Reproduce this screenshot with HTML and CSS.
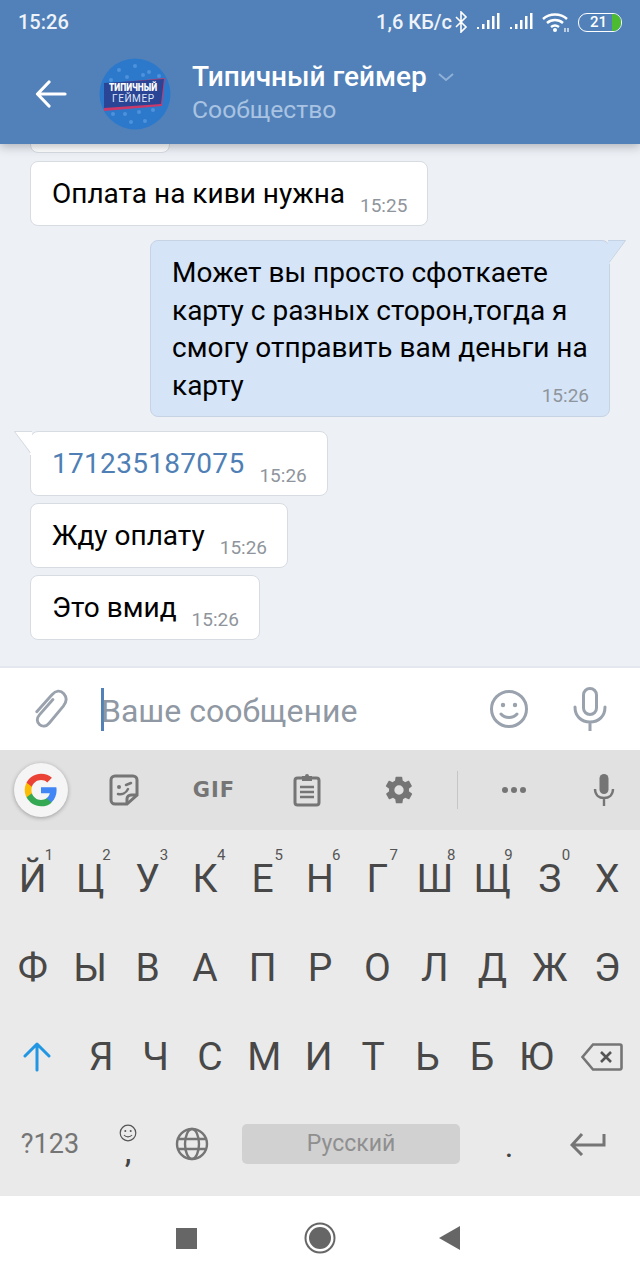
FILE: index.html
```html
<!DOCTYPE html>
<html lang="ru">
<head>
  <meta charset="UTF-8">
  <meta name="viewport" content="width=device-width, initial-scale=1.0">
  <title>Типичный геймер</title>
  <link rel="stylesheet" href="styles.css">
</head>
<body>
  <div class="app">
    <header class="top">
      <div class="status">
        <span class="clock">15:26</span>
        <div class="status-right">
          <span class="speed">1,6 КБ/с</span>
          <svg class="ic-bt" width="14" height="22" viewBox="0 0 14 22"><path d="M2 6l10 10-5 5V1l5 5L2 16" fill="none" stroke="#fff" stroke-width="1.6"/></svg>
          <svg class="ic-sig" width="24" height="20" viewBox="0 0 24 20"><path d="M1 15h2v2H1zM6 12h2.500v5H6zM11 8h2.500v9H11zM16 4h2.500v13H16zM21 1h2.500v16H21z" fill="#fff"/></svg>
          <svg class="ic-sig" width="24" height="20" viewBox="0 0 24 20"><path d="M1 15h2v2H1zM6 12h2.500v5H6zM11 8h2.500v9H11zM16 4h2.500v13H16zM21 1h2.500v16H21z" fill="#fff"/></svg>
          <svg class="ic-wifi" width="28" height="22" viewBox="0 0 28 22"><path d="M1 8c6.500-6 17.500-6 24 0M5 12c4.500-4 11.500-4 16 0M9 16c2.500-2 5.500-2 8 0" fill="none" stroke="#fff" stroke-width="2.400"/><circle cx="13" cy="19" r="2" fill="#fff"/><path d="M23 17v4M26 17v4" stroke="#fff" stroke-width="1.200"/></svg>
          <div class="battery"><span class="battery-level"></span><span class="battery-num">21</span></div>
        </div>
      </div>
      <div class="titlebar">
        <svg class="back" width="32" height="28" viewBox="0 0 32 28"><path d="M30 14H3M14 2L2.500 14 14 26" fill="none" stroke="#fff" stroke-width="3.200" stroke-linecap="round" stroke-linejoin="round"/></svg>
        <svg class="avatar" width="72" height="72" viewBox="0 0 72 72">
          <circle cx="36" cy="36" r="35.500" fill="#2c79cc"/>
          <g fill="#4f92dc">
            <circle cx="20" cy="12" r="2"/><circle cx="36" cy="8" r="2"/><circle cx="50" cy="14" r="2"/><circle cx="28" cy="19" r="2"/><circle cx="44" cy="17" r="2"/>
            <circle cx="12" cy="22" r="2"/><circle cx="60" cy="18" r="2"/><circle cx="14" cy="56" r="2"/><circle cx="26" cy="56" r="2"/><circle cx="40" cy="54" r="2"/>
            <circle cx="54" cy="52" r="2"/><circle cx="32" cy="64" r="2"/><circle cx="46" cy="63" r="2"/>
          </g>
          <path d="M5 26L66 20 63 48 5 53z" fill="#c93a6b"/>
          <path d="M5 25L65 21 62 46 5 50z" fill="#2a4595"/>
          <text class="av-top" x="10" y="33" textLength="48" lengthAdjust="spacingAndGlyphs">ТИПИЧНЫЙ</text>
          <text class="av-bot" x="13" y="44" textLength="42" lengthAdjust="spacing">ГЕЙМЕР</text>
        </svg>
        <div class="titles">
          <div class="title-row">
            <span class="title">Типичный геймер</span>
            <svg width="16" height="9" viewBox="0 0 16 9"><path d="M1 1l7 6 7-6" fill="none" stroke="#8fb0d8" stroke-width="2"/></svg>
          </div>
          <div class="subtitle">Сообщество</div>
        </div>
      </div>
    </header>

    <main class="chat">
      <div class="msg stub"></div>
      <div class="msg gap-s">
        <span class="msg-text">Оплата на киви нужна</span>
        <span class="msg-time">15:25</span>
      </div>
      <div class="msg out gap-l">
        <svg class="tail tail-out" width="20" height="24" viewBox="0 0 20 24"><path d="M0 .5h17.500L2 20v4H0z" fill="#d5e4f7"/><path d="M0 .5h17.500L1.500 22" fill="none" stroke="#c5d3e4"/></svg>
        <p class="msg-text">Может вы просто сфоткаете карту с разных сторон,тогда я смогу отправить вам деньги на карту <span class="msg-time">15:26</span></p>
      </div>
      <div class="msg gap-l">
        <svg class="tail tail-in" width="20" height="24" viewBox="0 0 20 24"><path d="M20 .5H2.500L18 20v4h2z" fill="#fff"/><path d="M20 .5H2.500L18.500 22" fill="none" stroke="#d7dce2"/></svg>
        <span class="msg-text link">171235187075</span>
        <span class="msg-time">15:26</span>
      </div>
      <div class="msg gap-xs">
        <span class="msg-text">Жду оплату</span>
        <span class="msg-time">15:26</span>
      </div>
      <div class="msg gap-xs">
        <span class="msg-text">Это вмид</span>
        <span class="msg-time">15:26</span>
      </div>
    </main>

    <div class="composer">
      <svg class="clip" width="38" height="42" viewBox="0 0 38 42"><path d="M22 11L8 27c-3.500 4-3 8 0 10.500s7 2 10-1.500L33 18c4-5 4-9 .5-13S25 1.500 21 6L5 24" fill="none" stroke="#99a2ad" stroke-width="3" stroke-linecap="round" transform="translate(1 1) scale(.95)"/></svg>
      <div class="input">
        <span class="caret"></span>
        <span class="placeholder">Ваше сообщение</span>
      </div>
      <svg class="smile" width="40" height="40" viewBox="0 0 40 40"><circle cx="20" cy="20" r="17.500" fill="none" stroke="#99a2ad" stroke-width="3"/><circle cx="14" cy="16" r="2.200" fill="#99a2ad"/><circle cx="26" cy="16" r="2.200" fill="#99a2ad"/><path d="M12 25c4 4.500 12 4.500 16 0" fill="none" stroke="#99a2ad" stroke-width="3" stroke-linecap="round"/></svg>
      <svg class="mic" width="34" height="44" viewBox="0 0 34 44"><rect x="10.500" y="1.500" width="13" height="26" rx="6.500" fill="none" stroke="#99a2ad" stroke-width="3"/><path d="M2 20c0 9 6 15 15 15s15-6 15-15M17 35v9" fill="none" stroke="#99a2ad" stroke-width="3" stroke-linecap="round"/></svg>
    </div>

    <section class="keyboard">
      <div class="kb-tools">
        <div class="tool"><div class="g-btn">
          <svg width="34" height="34" viewBox="0 0 48 48"><path fill="#4285f4" d="M46 24.500c0-1.600-.1-3.100-.4-4.500H24v8.500h12.400c-.5 2.900-2.200 5.300-4.600 6.900v5.700h7.400c4.300-4 6.800-9.900 6.800-16.600z"/><path fill="#34a853" d="M24 47c6.200 0 11.400-2 15.200-5.500l-7.400-5.700c-2 1.400-4.700 2.200-7.800 2.200-6 0-11-4-12.800-9.500H3.600v5.900C7.400 41.800 15.100 47 24 47z"/><path fill="#fbbc05" d="M11.200 28.500c-.5-1.400-.7-2.900-.7-4.500s.3-3.100.7-4.500v-5.900H3.600C2 16.700 1 20.200 1 24s1 7.300 2.600 10.400z"/><path fill="#ea4335" d="M24 10c3.400 0 6.400 1.200 8.800 3.400l6.600-6.600C35.400 3.100 30.200 1 24 1 15.100 1 7.400 6.200 3.600 13.600l7.600 5.900C13 14 18 10 24 10z"/></svg>
        </div></div>
        <div class="tool"><svg width="30" height="32" viewBox="0 0 30 32"><path d="M6 2h18a4 4 0 0 1 4 4v15L18 30H6a4 4 0 0 1-4-4V6a4 4 0 0 1 4-4z" fill="none" stroke="#757575" stroke-width="3"/><path d="M18 30v-5a4 4 0 0 1 4-4h6" fill="none" stroke="#757575" stroke-width="3"/><circle cx="10" cy="13" r="2" fill="#757575"/><path d="M17 11l5-2M9 20c4 1 8-1 10-5" fill="none" stroke="#757575" stroke-width="2.500" stroke-linecap="round"/></svg></div>
        <div class="tool gif">GIF</div>
        <div class="tool"><svg width="28" height="34" viewBox="0 0 28 34"><rect x="2" y="5" width="24" height="27" rx="2.500" fill="none" stroke="#757575" stroke-width="3"/><path d="M9 3h3a2 2 0 0 1 4 0h3v5H9z" fill="#757575"/><path d="M7 14h14M7 19h14M7 24h14" stroke="#757575" stroke-width="2.500"/></svg></div>
        <div class="tool"><svg width="32" height="32" viewBox="0 0 24 24"><path fill="#757575" d="M19.400 13c.1-.3.100-.7.100-1s0-.7-.1-1l2.100-1.600c.2-.2.200-.4.100-.6l-2-3.500c-.1-.2-.4-.3-.6-.2l-2.500 1c-.5-.4-1.100-.7-1.700-1l-.4-2.600c0-.3-.2-.5-.5-.5h-4c-.3 0-.5.200-.5.500l-.4 2.600c-.6.300-1.200.6-1.700 1l-2.500-1c-.2-.1-.5 0-.6.200l-2 3.500c-.1.200-.1.500.1.600L4.600 11c0 .3-.1.700-.1 1s0 .7.1 1l-2.100 1.600c-.2.200-.2.400-.1.600l2 3.500c.1.200.4.300.6.200l2.500-1c.5.400 1.100.7 1.700 1l.4 2.600c0 .3.200.5.500.5h4c.3 0 .5-.2.500-.5l.4-2.600c.6-.3 1.200-.6 1.700-1l2.500 1c.2.100.5 0 .6-.2l2-3.500c.1-.2.100-.5-.1-.6zM12 15.500a3.500 3.500 0 1 1 0-7 3.500 3.500 0 0 1 0 7z"/></svg></div>
        <div class="tool"><span class="tool-sep"></span></div>
        <div class="tool"><div class="dots"><span></span><span></span><span></span></div></div>
        <div class="tool tool-last"><svg width="22" height="32" viewBox="0 0 22 32"><rect x="6.500" y="0" width="9" height="20" rx="4.500" fill="#757575"/><path d="M2 15c0 6 4 9 9 9s9-3 9-9M11 24v8" fill="none" stroke="#757575" stroke-width="2.400"/></svg></div>
      </div>

      <div class="kb-row row-full">
        <div class="key">Й<sup>1</sup></div><div class="key">Ц<sup>2</sup></div><div class="key">У<sup>3</sup></div><div class="key">К<sup>4</sup></div><div class="key">Е<sup>5</sup></div><div class="key">Н<sup>6</sup></div><div class="key">Г<sup>7</sup></div><div class="key">Ш<sup>8</sup></div><div class="key">Щ<sup>9</sup></div><div class="key">З<sup>0</sup></div><div class="key">Х</div>
      </div>
      <div class="kb-row row-full">
        <div class="key">Ф</div><div class="key">Ы</div><div class="key">В</div><div class="key">А</div><div class="key">П</div><div class="key">Р</div><div class="key">О</div><div class="key">Л</div><div class="key">Д</div><div class="key">Ж</div><div class="key">Э</div>
      </div>
      <div class="kb-row row-shift">
        <div class="key"><svg width="30" height="30" viewBox="0 0 30 30"><path d="M15 28V3M3 14L15 2l12 12" fill="none" stroke="#2196e3" stroke-width="3" stroke-linecap="round" stroke-linejoin="round"/></svg></div>
        <div class="key">Я</div><div class="key">Ч</div><div class="key">С</div><div class="key">М</div><div class="key">И</div><div class="key">Т</div><div class="key">Ь</div><div class="key">Б</div><div class="key">Ю</div>
        <div class="key"><svg width="42" height="28" viewBox="0 0 42 28"><path d="M12 1.500h27a1.500 1.500 0 0 1 1.500 1.500v22a1.500 1.500 0 0 1-1.500 1.500H12L1.500 14z" fill="none" stroke="#757575" stroke-width="2.600"/><path d="M20 9l10 10M30 9L20 19" stroke="#555" stroke-width="2.600"/></svg></div>
      </div>
      <div class="kb-row row-bottom">
        <div class="key key-sym">?123</div>
        <div class="key key-comma">
          <svg width="18" height="18" viewBox="0 0 18 18"><circle cx="9" cy="9" r="7.800" fill="none" stroke="#555" stroke-width="1.200"/><circle cx="6.300" cy="7" r="1" fill="#555"/><circle cx="11.700" cy="7" r="1" fill="#555"/><path d="M5 11c2 2.500 6 2.500 8 0" fill="none" stroke="#555" stroke-width="1.200"/></svg>
          <span class="comma">,</span>
        </div>
        <div class="key"><svg width="34" height="34" viewBox="0 0 34 34"><g fill="none" stroke="#757575" stroke-width="2.400"><circle cx="17" cy="17" r="15"/><ellipse cx="17" cy="17" rx="7" ry="15"/><path d="M3 12h28M3 22h28"/></g></svg></div>
        <div class="key key-space"><span class="space">Русский</span></div>
        <div class="key key-dot">.</div>
        <div class="key key-enter"><svg width="36" height="24" viewBox="0 0 36 24"><path d="M34 2v11H3M12 2L2 13l10 10" fill="none" stroke="#757575" stroke-width="3"/></svg></div>
      </div>
    </section>

    <nav class="softkeys">
      <span class="nav-square"></span>
      <span class="nav-home"></span>
      <svg width="22" height="24" viewBox="0 0 22 24"><path d="M21 0v24L0 12z" fill="#666"/></svg>
    </nav>
  </div>
</body>
</html>
```

FILE: styles.css
```css
body {
  font-family: Roboto, "Noto Sans", sans-serif;
  margin: 0;
  padding: 0;
  overflow: hidden;
}
.app {
  width: 640px;
  height: 1280px;
  display: flex;
  flex-direction: column;
  background: #fff;
}

/* top bar */
.top {
  height: 144px;
  flex: none;
  background: #5181b8;
  color: #fff;
  box-shadow: 0 2px 10px rgba(40, 50, 60, 0.35);
  position: relative;
  z-index: 2;
}
.status {
  height: 44px;
  padding: 0 18px;
  display: flex;
  justify-content: space-between;
  align-items: center;
}
.clock {
  font-size: 20px;
  font-weight: 500;
  color: #eef3f9;
}
.status-right {
  display: flex;
  align-items: center;
}
.speed {
  font-size: 20px;
  font-weight: 500;
  color: #eef3f9;
}
.ic-bt { margin-left: 2px; }
.ic-sig { margin-left: 8px; }
.ic-sig + .ic-sig { margin-left: 9px; }
.ic-wifi { margin-left: 9px; }
.battery {
  width: 42px;
  height: 17px;
  margin-left: 8px;
  border: 1.500px solid #fff;
  border-radius: 9px;
  position: relative;
  overflow: hidden;
}
.battery-level {
  position: absolute;
  top: 0;
  bottom: 0;
  right: 0;
  width: 9px;
  background: #4cbb30;
}
.battery-num {
  position: absolute;
  left: 11px;
  top: -1px;
  font-size: 15px;
  line-height: 19px;
  font-weight: 500;
}
.titlebar {
  height: 100px;
  display: flex;
  align-items: center;
}
.back { margin: 0 0 0 35px; }
.avatar { margin-left: 32px; }
.titles { margin-left: 21px; margin-top: -2px; }
.title-row {
  display: flex;
  align-items: center;
  gap: 11px;
}
.title {
  font-size: 28px;
  font-weight: 500;
  line-height: 34px;
}
.subtitle {
  font-size: 24.700px;
  line-height: 32px;
  color: #a9c3e3;
}
.av-top {
  font-family: Roboto, sans-serif;
  font-size: 11px;
  font-weight: 900;
  fill: #fff;
}
.av-bot {
  font-family: Roboto, sans-serif;
  font-size: 10px;
  fill: #dfe6f5;
}

/* messages */
.chat {
  flex: 1;
  min-height: 0;
  background: #edf0f5;
  padding: 0 0 26px 30px;
  display: flex;
  flex-direction: column;
  justify-content: flex-end;
  align-items: flex-start;
  overflow: hidden;
}
.msg {
  flex: none;
  position: relative;
  box-sizing: border-box;
  height: 65px;
  padding: 0 20px 0 21px;
  display: flex;
  gap: 15px;
  background: #fff;
  border: 1px solid #d7dce2;
  border-radius: 8px;
}
.stub { width: 140px; }
.gap-s { margin-top: 8px; }
.gap-l { margin-top: 14px; }
.gap-xs { margin-top: 7px; }
.msg-text {
  font-size: 28px;
  line-height: 64px;
  color: #000;
  margin: 0;
}
.msg-time {
  font-size: 19px;
  color: #8f959c;
  align-self: flex-end;
  line-height: 22px;
  margin-bottom: 8px;
}
.link {
  color: #4f7fb5;
  letter-spacing: 0.300px;
}
.out {
  width: 460px;
  height: 177px;
  margin-left: 120px;
  background: #d5e4f7;
  border-color: #c5d3e4;
}
.out .msg-text {
  line-height: 37.500px;
  padding-top: 13px;
  text-align-last: justify;
}
.out .msg-time {
  vertical-align: -7px;
  margin: 0;
}
.tail {
  position: absolute;
  top: -1px;
}
.tail-out { right: -19px; }
.tail-in { left: -19px; }

/* composer */
.composer {
  height: 84px;
  flex: none;
  box-sizing: border-box;
  border-top: 2px solid #e4e8ee;
  display: flex;
  align-items: center;
  padding-left: 31px;
}
.input {
  flex: 1;
  display: flex;
  align-items: center;
  margin-left: 32px;
}
.caret {
  width: 3px;
  height: 43px;
  background: #5181b8;
}
.placeholder {
  font-size: 32px;
  color: #8f98a3;
  margin-left: -3px;
  padding-top: 3px;
}
.smile { margin-right: 44px; }
.mic { margin-right: 33px; }

/* keyboard */
.keyboard {
  height: 446px;
  flex: none;
  background: #eaeaea;
  display: flex;
  flex-direction: column;
}
.kb-tools {
  height: 80px;
  flex: none;
  margin-bottom: 4px;
  background: #e1e1e1;
  display: grid;
  grid-template-columns: 82px 84px 96px 90px 94px 22px 92px 80px;
  align-items: center;
  justify-items: center;
}
.tool {
  display: flex;
  align-items: center;
  justify-content: center;
}
.tool-last { padding-left: 8px; }
.g-btn {
  width: 54px;
  height: 54px;
  border-radius: 50%;
  background: #f5f5f5;
  box-shadow: 0 1px 4px rgba(0, 0, 0, 0.3);
  display: flex;
  align-items: center;
  justify-content: center;
}
.gif {
  font-family: "DejaVu Sans", sans-serif;
  font-size: 21px;
  font-weight: bold;
  color: #757575;
  letter-spacing: 1px;
}
.tool-sep {
  width: 1px;
  height: 38px;
  background: #c6c6c6;
}
.dots {
  display: flex;
  gap: 3px;
}
.dots span {
  width: 6px;
  height: 6px;
  border-radius: 50%;
  background: #757575;
}
.kb-row {
  flex: none;
  height: 89px;
  display: grid;
  align-items: center;
  justify-items: center;
}
.row-full {
  padding: 0 4px;
  grid-template-columns: repeat(11, 1fr);
}
.row-shift {
  height: 90px;
  grid-template-columns: 74px repeat(9, 54.400px) 76px;
}
.row-bottom {
  height: 84px;
  grid-template-columns: 100px 56px 72px 246px 70px 96px;
}
.key {
  position: relative;
  width: 100%;
  font-size: 39px;
  font-weight: 400;
  color: #484848;
  text-align: center;
  display: flex;
  justify-content: center;
  align-items: center;
}
.key sup {
  position: absolute;
  top: -10px;
  left: 50%;
  margin-left: 12px;
  font-size: 15px;
  font-weight: 400;
  line-height: 18px;
  color: #555;
}
.key-sym {
  font-size: 27px;
  font-weight: 400;
  color: #757575;
}
.key-comma {
  flex-direction: column;
}
.comma {
  font-size: 30px;
  font-weight: 500;
  line-height: 24px;
  color: #444;
  margin-top: -2px;
}
.key-space {
  padding: 0 14px;
  box-sizing: border-box;
}
.space {
  flex: 1;
  height: 40px;
  line-height: 40px;
  background: #d1d1d1;
  border-radius: 5px;
  font-size: 23px;
  font-weight: 400;
  color: #8f8f8f;
}
.key-dot {
  font-size: 27px;
  font-weight: 500;
  color: #444;
  padding-top: 8px;
}
.key-enter { padding-right: 8px; box-sizing: border-box; }

/* android nav */
.softkeys {
  height: 84px;
  flex: none;
  background: #fff;
  display: flex;
  align-items: center;
  padding-left: 176px;
}
.nav-square {
  width: 21px;
  height: 21px;
  background: #666;
}
.nav-home {
  width: 22px;
  height: 22px;
  margin: 0 108px 0 112px;
  background: #666;
  border-radius: 50%;
  box-shadow: 0 0 0 2.500px #fff, 0 0 0 4.500px #666;
}
```
